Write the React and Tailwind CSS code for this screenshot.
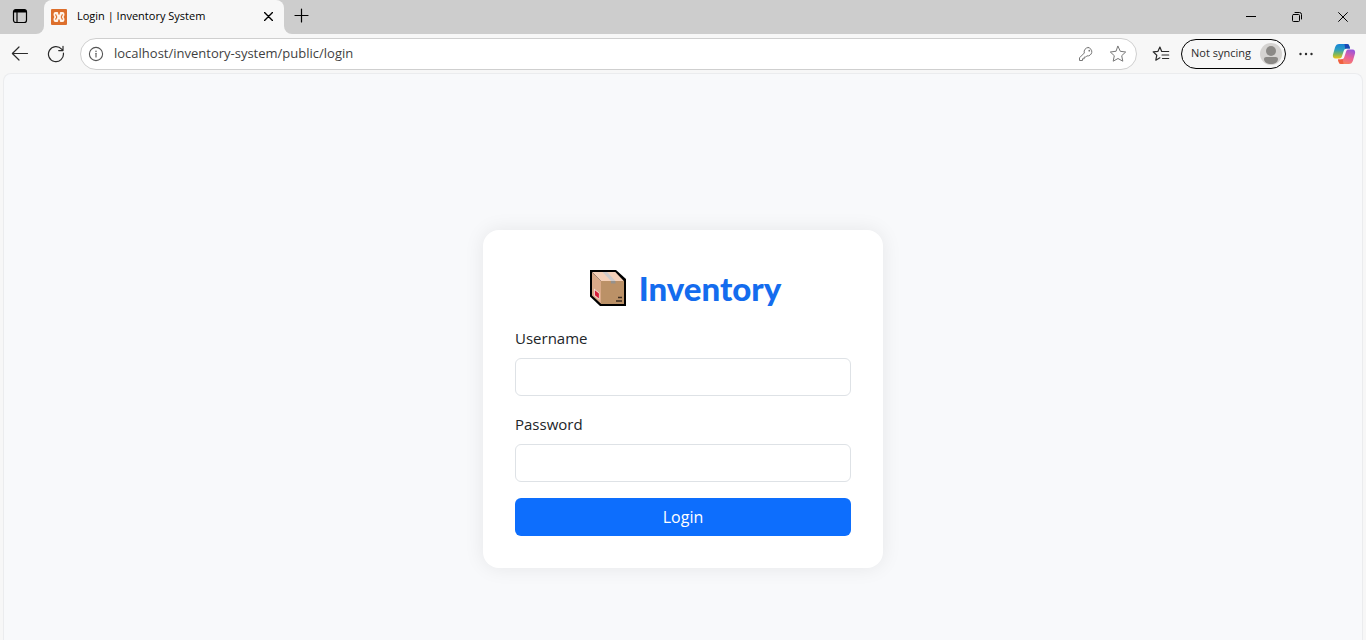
import React from "react";

const stroke = { fill: "none", stroke: "currentColor", strokeLinecap: "round", strokeLinejoin: "round" };

function TabActionsIcon() {
  return (
    <svg width="16" height="16" viewBox="0 0 16 16" aria-hidden="true">
      <rect x="1.500" y="1.500" width="13" height="13" rx="2.300" {...stroke} strokeWidth="1.200" />
      <path d="M1.500 4.500V4A2.600 2.600 0 0 1 4.100 1.400h7.800A2.600 2.600 0 0 1 14.500 4v.5z" fill="currentColor" />
      <path d="M5 4.500v10" {...stroke} strokeWidth="1.200" />
    </svg>
  );
}

function XamppIcon() {
  return (
    <svg width="16" height="16" viewBox="0 0 16 16" aria-hidden="true">
      <rect width="16" height="16" rx="1" fill="#dd6f2c" />
      <path
        d="M4.500 3h1.700Q7.200 3 7.200 4v1.500h1.600V4q0-1 1-1h1.700Q13.500 3 13.500 5.300q0 1.700-.9 2.700.9 1 .9 2.700Q13.500 13 11.500 13H9.800q-1 0-1-1v-1.500H7.200V12q0 1-1 1H4.500q-2 0-2-2.300Q2.500 9 3.400 8q-.9-1-.9-2.700Q2.500 3 4.500 3z"
        fill="#fff4ea"
      />
      <path
        d="M4.700 5.200v.4q0 1 .9 1.700v1.400q-.9.700-.9 1.700v.4M11.300 5.200v.4q0 1-.9 1.700v1.400q.9.700.9 1.700v.4"
        fill="none"
        stroke="#dd6f2c"
        strokeWidth="1.100"
      />
    </svg>
  );
}

function CloseIcon({ size = 10, weight = 1.2 }) {
  return (
    <svg width={size} height={size} viewBox="0 0 10 10" aria-hidden="true">
      <path d="M.6.6l8.800 8.800M9.400.6.6 9.400" {...stroke} strokeWidth={weight} />
    </svg>
  );
}

function BackIcon() {
  return (
    <svg width="18" height="18" viewBox="0 0 18 18" aria-hidden="true">
      <path d="M16.500 8.500h-15M8 2 1.400 8.500 8 15" {...stroke} strokeWidth="1.200" />
    </svg>
  );
}

function ReloadIcon() {
  return (
    <svg width="18" height="18" viewBox="0 0 18 18" aria-hidden="true">
      <path d="M16.400 8.200A7.500 7.500 0 1 1 14.600 4.200L16 5.600M16 1.300v4.300h-4.300" {...stroke} strokeWidth="1.200" />
    </svg>
  );
}

function InfoIcon() {
  return (
    <svg width="16" height="16" viewBox="0 0 16 16" aria-hidden="true">
      <circle cx="8" cy="8" r="6.600" {...stroke} strokeWidth="1.100" />
      <path d="M8 7.300v3.700" {...stroke} strokeWidth="1.100" />
      <circle cx="8" cy="5.200" r=".75" fill="currentColor" />
    </svg>
  );
}

function KeyIcon() {
  return (
    <svg width="16" height="16" viewBox="0 0 16 16" aria-hidden="true">
      <path
        d="M10.300 1.500a4.200 4.200 0 0 0-4 5.500L1.500 11.800v2.700h3v-1.700h1.700v-1.700h1.500l1.100-1.200a4.200 4.200 0 1 0 1.500-8.400z"
        {...stroke}
        strokeWidth="1"
      />
      <circle cx="11.300" cy="4.700" r=".9" fill="currentColor" />
    </svg>
  );
}

function StarIcon() {
  return (
    <svg width="18" height="18" viewBox="0 0 18 18" aria-hidden="true">
      <path
        d="m9 1.300 2.300 5 5.400.7-4 3.700 1.100 5.500L9 13.500l-4.800 2.700 1.100-5.500-4-3.700 5.400-.7z"
        {...stroke}
        strokeWidth="1"
      />
    </svg>
  );
}

function FavoritesIcon() {
  return (
    <svg width="18" height="18" viewBox="0 0 18 18" aria-hidden="true">
      <path
        d="M11 6.500H9.700L7.900 2 6 6.300l-4.800.6 3.600 3.300-1 5 4.100-2.400M10.500 6.500h6.200M10 10h6.700M10.500 13.500h6.200"
        {...stroke}
        strokeWidth="1.200"
      />
    </svg>
  );
}

function AvatarIcon() {
  return (
    <svg width="22" height="22" viewBox="0 0 22 22" aria-hidden="true">
      <circle cx="11" cy="11" r="11" fill="#d5d3d1" />
      <circle cx="11" cy="8" r="5" fill="#8b8986" />
      <path d="M4 16c0-1.300 1-2 2.200-2h9.600c1.200 0 2.200.7 2.200 2 0 3-3 5-7 5s-7-2-7-5z" fill="#8b8986" />
    </svg>
  );
}

function CopilotIcon() {
  return (
    <svg width="24" height="22" viewBox="0 0 24 22" aria-hidden="true">
      <defs>
        <linearGradient id="cpLeft" x1="0" y1="0" x2="0" y2="1">
          <stop offset="0" stopColor="#1684d8" />
          <stop offset=".4" stopColor="#2d9fc0" />
          <stop offset=".7" stopColor="#7fb85a" />
          <stop offset="1" stopColor="#f2c218" />
        </linearGradient>
        <linearGradient id="cpRight" x1=".7" y1="0" x2=".3" y2="1">
          <stop offset="0" stopColor="#9a55dc" />
          <stop offset=".5" stopColor="#e8609a" />
          <stop offset="1" stopColor="#fb8658" />
        </linearGradient>
      </defs>
      <path d="M15 1c1.300 0 2 .8 2.300 2l.8 2.500h-3c-2 0-3 1-3.500 2.700l-1.800 5.600c-.4 1.200-1.200 1.700-2.400 1.700H3.500C1.200 15.500.5 13.500 1 11.500l2-7C3.800 2 5 1 7.200 1z" fill="url(#cpLeft)" />
      <path d="M9 21c-1.300 0-2-.8-2.300-2l-.8-2.500h3c2 0 3-1 3.500-2.700l1.800-5.600c.4-1.200 1.200-1.700 2.400-1.700h3.900c2.300 0 3 2 2.500 4l-2 7C20.200 20 19 21 16.800 21z" fill="url(#cpRight)" />
      <path d="M12.500 1H15c1.300 0 2 .8 2.300 2l.8 2.500h-3c-.7 0-1.300.1-1.800.4z" fill="#1b47b5" />
      <path d="M11.500 21H9c-1.300 0-2-.8-2.300-2l-.8-2.500h3c.7 0 1.300-.1 1.800-.4z" fill="#ef6040" />
    </svg>
  );
}

function BoxIcon() {
  return (
    <svg width="38" height="38" viewBox="0 0 38 38" aria-hidden="true">
      <path d="M1 1h26l10 9v27H11L1 27.500z" fill="#000" />
      <path d="M3 3.200 12 12v22.800L3 26.500z" fill="#d9a988" />
      <path d="M3 3h23.300l8.500 9H12z" fill="#f5d0b8" />
      <path d="M12 12h23v23H12z" fill="#bb9167" />
      <path d="M13.500 3h4.500l8.500 9H22z" fill="#cfcac9" />
      <path d="M22 12h4.500v2.500H22z" fill="#96918c" />
      <path d="m5 19.500 5.500 4.500v7L5 26.500z" fill="#f4dfda" />
      <path d="m5.900 21.200 4 3.200v5l-4-3.200z" fill="#d51c38" />
      <path d="M29 28.500h4M27 32h6" stroke="#3c2d20" strokeWidth="1.300" />
    </svg>
  );
}

function TabStrip() {
  return (
    <header className="flex h-[34px] bg-[#f7f7f7] text-black">
      <div className="flex w-11 shrink-0 items-center rounded-br-lg bg-[#cdcdcd] pb-[2px] pl-3">
        <button type="button" aria-label="Tab actions menu"><TabActionsIcon /></button>
      </div>
      <div className="flex w-60 shrink-0 bg-[#cdcdcd]">
        <div className="flex flex-1 items-center rounded-t-lg bg-[#f7f7f7] pb-px pl-[7px] pr-[11px]">
          <XamppIcon />
          <span className="ml-[10px] flex-1 whitespace-nowrap text-[11px]">Login | Inventory System</span>
          <button type="button" aria-label="Close tab"><CloseIcon size={9} weight={1.5} /></button>
        </div>
      </div>
      <div className="flex flex-1 items-center justify-between rounded-bl-lg bg-[#cdcdcd]">
        <button type="button" aria-label="New tab" className="ml-[10px] pb-[3px]">
          <svg width="15" height="15" viewBox="0 0 15 15" aria-hidden="true">
            <path d="M7.500 1v13M1 7.500h13" {...stroke} strokeWidth="1.200" />
          </svg>
        </button>
        <div className="flex h-full">
          <button type="button" aria-label="Minimize" className="flex w-[46px] items-center justify-center">
            <svg width="10" height="10" viewBox="0 0 10 10" aria-hidden="true">
              <path d="M0 4.500h10" stroke="currentColor" />
            </svg>
          </button>
          <button type="button" aria-label="Restore" className="flex w-[46px] items-center justify-center">
            <svg width="10" height="10" viewBox="0 0 10 10" aria-hidden="true">
              <rect x=".5" y="2.500" width="7" height="7" rx="1" {...stroke} />
              <path d="M3 .5h4.500a2 2 0 0 1 2 2V7" {...stroke} />
            </svg>
          </button>
          <button type="button" aria-label="Close window" className="flex w-[46px] items-center justify-center">
            <CloseIcon size={10} weight={1} />
          </button>
        </div>
      </div>
    </header>
  );
}

function Toolbar() {
  return (
    <nav className="flex h-[39px] items-center pl-[11px] pr-[10px] text-[#2b2b2b]">
      <button type="button" aria-label="Back"><BackIcon /></button>
      <button type="button" aria-label="Refresh" className="ml-[18px]"><ReloadIcon /></button>
      <div className="ml-[15px] flex h-8 flex-1 items-center rounded-full border border-[#cfcfcf] bg-white pl-[7px] pr-[9px]">
        <span className="text-[#555]"><InfoIcon /></span>
        <input
          aria-label="Address"
          defaultValue="localhost/inventory-system/public/login"
          className="ml-[10px] min-w-0 flex-1 bg-transparent text-[13px] text-[#3f3f3f] outline-none"
        />
        <button type="button" aria-label="Saved passwords" className="text-[#777]"><KeyIcon /></button>
        <button type="button" aria-label="Add to favorites" className="ml-[15px] text-[#777]"><StarIcon /></button>
      </div>
      <button type="button" aria-label="Favorites" className="ml-[15px]"><FavoritesIcon /></button>
      <button type="button" className="ml-[11px] flex h-[30px] w-[105px] items-center justify-between whitespace-nowrap rounded-full border border-black pl-[9px] pr-[3px] text-[11px]">
        Not syncing
        <AvatarIcon />
      </button>
      <button type="button" aria-label="Settings and more" className="ml-3">
        <svg width="16" height="16" viewBox="0 0 16 16" fill="currentColor" aria-hidden="true">
          <circle cx="2.500" cy="8" r="1.200" />
          <circle cx="8" cy="8" r="1.200" />
          <circle cx="13.500" cy="8" r="1.200" />
        </svg>
      </button>
      <button type="button" aria-label="Copilot" className="ml-[18px]"><CopilotIcon /></button>
    </nav>
  );
}

function Field({ id, label, type }) {
  return (
    <div className="mb-4">
      <label htmlFor={id} className="mb-2 block">{label}</label>
      <input id={id} type={type} className="block h-[38px] w-full rounded-md border border-[#dee2e6] bg-white px-3 outline-none" />
    </div>
  );
}

export default function App() {
  return (
    <div className="flex h-screen flex-col overflow-hidden bg-[#f7f7f7] font-['Open_Sans','Noto_Sans',sans-serif]">
      <TabStrip />
      <Toolbar />
      <main className="mx-[3px] flex-1 rounded-t-lg border border-b-0 border-[#ebecee] bg-[#f8f9fb] px-4 pt-[156px] text-[#212529]">
        <form
          className="mx-auto w-full max-w-[400px] rounded-2xl bg-white p-8 text-[15px] leading-6 shadow-[0_0_20px_rgba(0,0,0,0.08)]"
          onSubmit={(e) => e.preventDefault()}
        >
          <h1 className="mb-3 flex h-[52px] items-center justify-center gap-3 pl-1 font-['Lato','Open_Sans',sans-serif] text-[33px] font-black text-[#146cee]">
            <BoxIcon />
            Inventory
          </h1>
          <Field id="username" label="Username" type="text" />
          <Field id="password" label="Password" type="password" />
          <button type="submit" className="h-[38px] w-full rounded-md bg-[#0d6efd] text-base text-white">Login</button>
        </form>
      </main>
    </div>
  );
}
